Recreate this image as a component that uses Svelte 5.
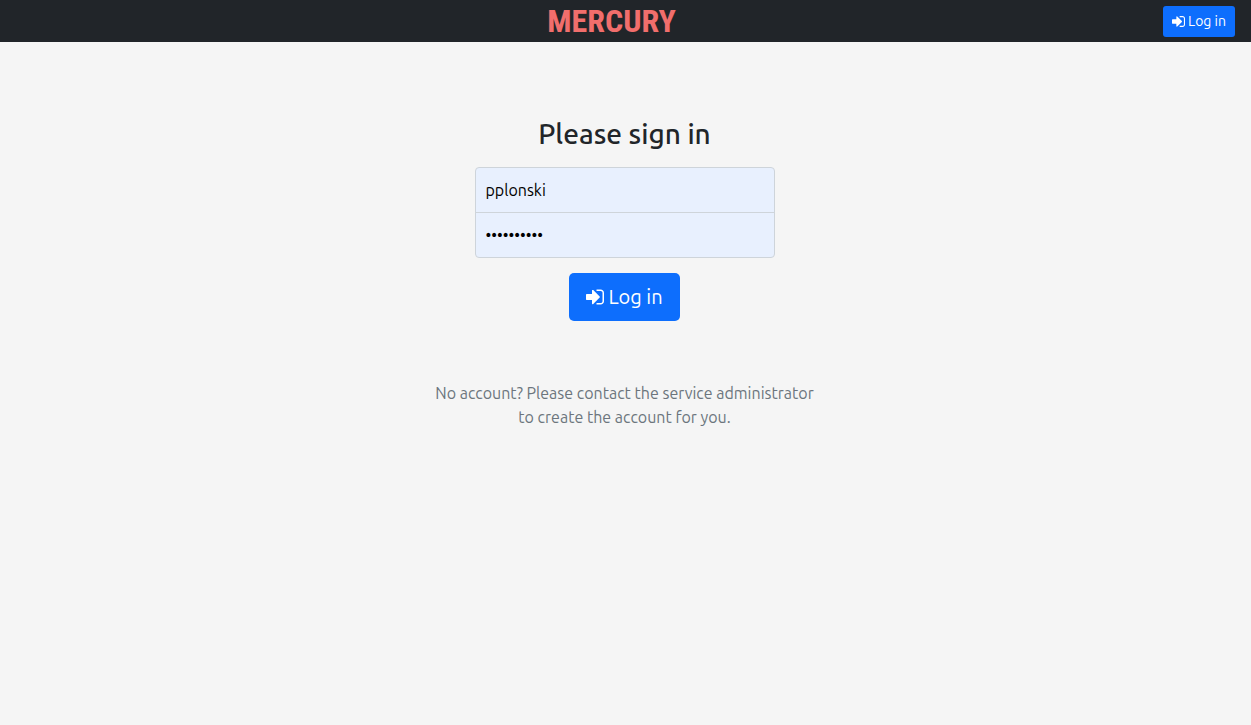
<script>
  let username = $state('pplonski');
  let password = $state('mercury123');
</script>

{#snippet signInIcon()}
  <svg class="icon" viewBox="0 128 1536 1536" aria-hidden="true">
    <path
      fill="currentColor"
      d="M1184 896q0 26-19 45l-544 544q-19 19-45 19t-45-19-19-45v-288h-448q-26 0-45-19t-19-45v-384q0-26 19-45t45-19h448v-288q0-26 19-45t45-19 45 19l544 544q19 19 19 45zm352-352v704q0 119-84.500 203.500t-203.500 84.500h-320q-13 0-22.500-9.500t-9.500-22.500q0-4-1-20t-.5-26.500 3-23.500 10-19.500 20.500-6.500h320q66 0 113-47t47-113v-704q0-66-47-113t-113-47h-312l-11.500-1-11.500-3-8-5.500-7-9-2-13.500q0-4-1-20t-.5-26.500 3-23.500 10-19.500 20.500-6.500h320q119 0 203.500 84.500t84.500 203.500z"
    />
  </svg>
{/snippet}

<header>
  <a class="brand" href="#home">MERCURY</a>
  <a class="button small" href="#login">{@render signInIcon()}Log in</a>
</header>

<main>
  <form onsubmit={(event) => event.preventDefault()}>
    <h1>Please sign in</h1>
    <div class="fields">
      <input type="text" aria-label="Username" autocomplete="username" bind:value={username} />
      <input type="password" aria-label="Password" autocomplete="current-password" bind:value={password} />
    </div>
    <button class="button large" type="submit">{@render signInIcon()}Log in</button>
  </form>
  <p>No account? Please contact the service administrator<br />to create the account for you.</p>
</main>

<style>
  :global(body) {
    background: #f5f5f5;
    color: #212529;
    font-family: Ubuntu, 'Noto Sans', sans-serif;
    font-size: 16px;
    line-height: 24px;
  }

  header {
    display: grid;
    grid-template-columns: 1fr auto 1fr;
    align-items: center;
    height: 42px;
    padding: 0 16px;
    box-sizing: border-box;
    background: #212529;
  }

  .brand {
    grid-column: 2;
    margin-right: 28px;
    color: #f16e6c;
    font-family: 'Roboto Condensed', 'DejaVu Sans Condensed', sans-serif;
    font-size: 32px;
    font-weight: 700;
    line-height: 42px;
    text-decoration: none;
  }

  .button {
    display: inline-flex;
    align-items: center;
    justify-content: center;
    box-sizing: border-box;
    border: 0;
    background: #0d6efd;
    color: #fff;
    font-family: inherit;
    text-decoration: none;
    white-space: nowrap;
    cursor: pointer;
  }

  .small {
    justify-self: end;
    gap: 3px;
    height: 31px;
    padding: 0 9px;
    border-radius: 3px;
    font-size: 14px;
  }

  .large {
    gap: 4px;
    height: 48px;
    margin-top: 15px;
    padding: 0 17px;
    border-radius: 5px;
    font-size: 20px;
    line-height: 30px;
  }

  .icon {
    width: 13px;
    height: 13px;
  }

  .large .icon {
    width: 18px;
    height: 18px;
  }

  main {
    display: flex;
    flex-direction: column;
    align-items: center;
    padding: 75px 17px 0 15px;
    text-align: center;
  }

  form {
    display: flex;
    flex-direction: column;
    align-items: center;
    width: 100%;
    max-width: 300px;
  }

  h1 {
    margin: 0 0 16px;
    font-size: 28px;
    font-weight: 500;
    line-height: 34px;
  }

  .fields {
    width: 100%;
    box-sizing: border-box;
    overflow: hidden;
    border: 1px solid #ced4da;
    border-radius: 4px;
    background: #e8f0fe;
  }

  input {
    display: block;
    width: 100%;
    height: 44px;
    padding: 0 10px;
    box-sizing: border-box;
    border: 0;
    border-radius: 0;
    outline: 0;
    background: transparent;
    color: #000;
    font: inherit;
  }

  input + input {
    height: 45px;
    border-top: 1px solid #ced4da;
  }

  .fields:focus-within {
    border-color: #86b7fe;
  }

  p {
    margin: 60px 0 0;
    color: #6c757d;
  }
</style>
